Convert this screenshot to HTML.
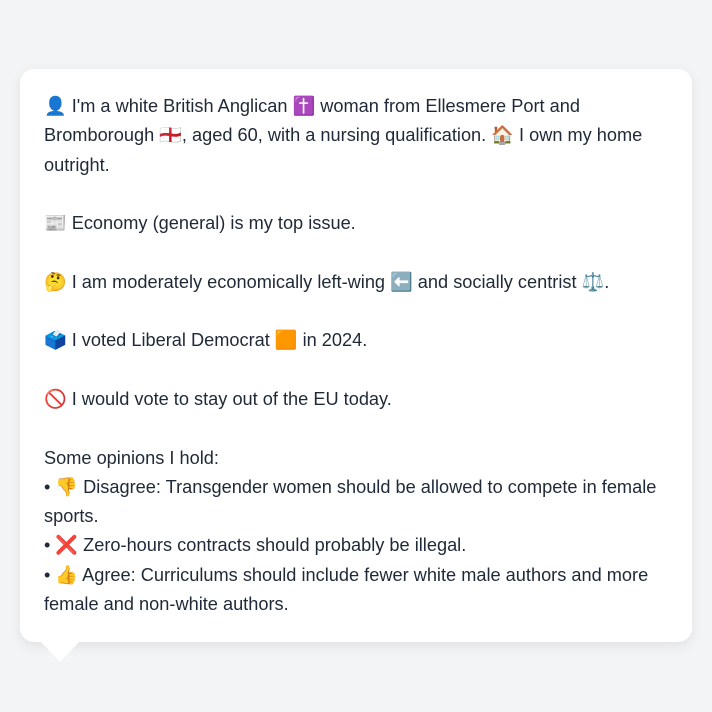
<!DOCTYPE html>
<html><head><meta charset="utf-8"><style>
html,body{margin:0;padding:0;}
body{width:712px;height:712px;background:#f3f4f6;position:relative;overflow:hidden;font-family:"Liberation Sans","Noto Color Emoji","DejaVu Sans",sans-serif;}
.card{position:absolute;left:20px;top:69px;width:672px;height:573px;background:#fff;border-radius:14px;box-shadow:0 4px 12px rgba(0,0,0,0.08);}
.tail{position:absolute;left:40px;top:641px;width:0;height:0;border-left:20px solid transparent;border-right:20px solid transparent;border-top:21px solid #fff;}
.txt{position:absolute;left:44px;top:92px;font-size:18.2px;line-height:29.3px;color:#1f2937;white-space:nowrap;}
</style></head><body>
<div class="card"></div>
<div class="tail"></div>
<div class="txt">👤 I'm a white British Anglican ✝️ woman from Ellesmere Port and<br>Bromborough 🏴󠁧󠁢󠁥󠁮󠁧󠁿, aged 60, with a nursing qualification. 🏠 I own my home<br>outright.<br><br>📰 Economy (general) is my top issue.<br><br>🤔 I am moderately economically left-wing ⬅️ and socially centrist ⚖️.<br><br>🗳️ I voted Liberal Democrat 🟧 in 2024.<br><br>🚫 I would vote to stay out of the EU today.<br><br>Some opinions I hold:<br>• 👎 Disagree: Transgender women should be allowed to compete in female<br>sports.<br>• ❌ Zero-hours contracts should probably be illegal.<br>• 👍 Agree: Curriculums should include fewer white male authors and more<br>female and non-white authors.</div>
</body></html>
